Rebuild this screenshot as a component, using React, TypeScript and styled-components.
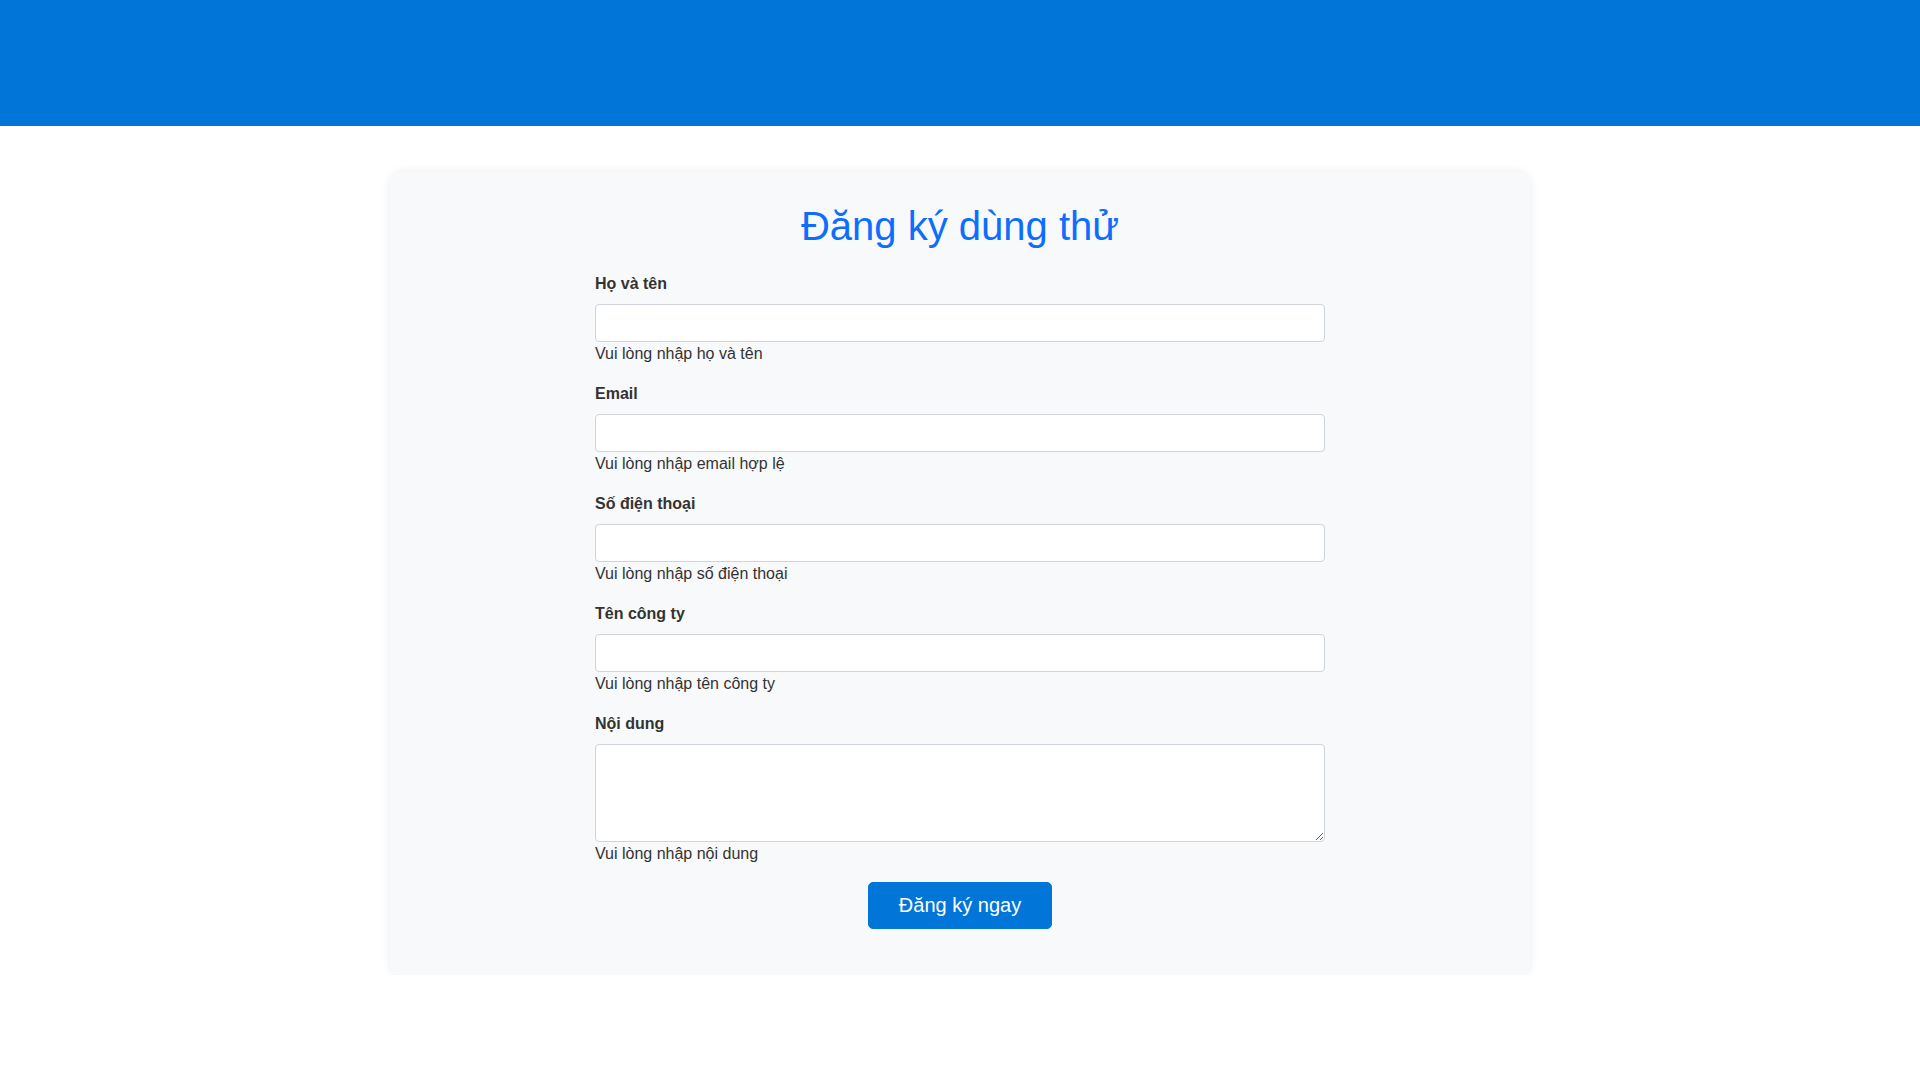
import React from "react";
import styled, { createGlobalStyle } from "styled-components";

const GlobalStyle = createGlobalStyle`
  * { box-sizing: border-box; }
  html, body { margin: 0; padding: 0; background: #ffffff; }
  body {
    font-family: "Liberation Sans", Arial, Helvetica, sans-serif;
    font-size: 16px;
    line-height: 1.5;
    color: #333333;
  }
`;

const Header = styled.header`
  height: 126px;
  background: #0275d8;
`;

const Card = styled.section`
  width: 1140px;
  margin: 46px auto 0;
  padding: 30px 30px 46px;
  background: #f8f9fa;
  border-radius: 10px;
  box-shadow: 0 0 10px rgba(0, 0, 0, 0.08);
`;

const Title = styled.h1`
  margin: 0 0 22px;
  text-align: center;
  font-size: 40px;
  line-height: 48px;
  font-weight: 400;
  color: #0d6efd;
`;

const Form = styled.form`
  width: 730px;
  margin: 0 auto;
  display: flex;
  flex-direction: column;
`;

const Group = styled.div`
  display: flex;
  flex-direction: column;
  margin-bottom: 16px;
`;

const Label = styled.label`
  font-weight: 700;
  font-size: 16px;
  line-height: 24px;
  color: #333333;
  margin-bottom: 8px;
`;

const fieldStyles = `
  width: 100%;
  display: block;
  font-family: "Liberation Sans", Arial, Helvetica, sans-serif;
  font-size: 16px;
  line-height: 24px;
  color: #333333;
  background: #ffffff;
  border: 1px solid #ced4da;
  border-radius: 4px;
  padding: 6px 12px;
  outline: none;
`;

const Input = styled.input`
  ${fieldStyles}
  height: 38px;
`;

const TextArea = styled.textarea`
  ${fieldStyles}
  height: 98px;
  resize: vertical;
`;

const Help = styled.div`
  font-size: 16px;
  line-height: 24px;
  color: #333333;
`;

const Actions = styled.div`
  display: flex;
  justify-content: center;
`;

const Button = styled.button`
  font-family: "Liberation Sans", Arial, Helvetica, sans-serif;
  font-size: 20px;
  line-height: 29px;
  padding: 8px 30px;
  color: #ffffff;
  background: #0275d8;
  border: 1px solid #0275d8;
  border-radius: 5px;
  cursor: pointer;
`;

const fields = [
  { id: "name", label: "Họ và tên", help: "Vui lòng nhập họ và tên", type: "text" },
  { id: "email", label: "Email", help: "Vui lòng nhập email hợp lệ", type: "email" },
  { id: "phone", label: "Số điện thoại", help: "Vui lòng nhập số điện thoại", type: "tel" },
  { id: "company", label: "Tên công ty", help: "Vui lòng nhập tên công ty", type: "text" },
];

export default function App() {
  return (
    <>
      <GlobalStyle />
      <Header />
      <Card>
        <Title>Đăng ký dùng thử</Title>
        <Form onSubmit={(e) => e.preventDefault()}>
          {fields.map((f) => (
            <Group key={f.id}>
              <Label htmlFor={f.id}>{f.label}</Label>
              <Input id={f.id} type={f.type} />
              <Help>{f.help}</Help>
            </Group>
          ))}
          <Group>
            <Label htmlFor="content">Nội dung</Label>
            <TextArea id="content" />
            <Help>Vui lòng nhập nội dung</Help>
          </Group>
          <Actions>
            <Button type="submit">Đăng ký ngay</Button>
          </Actions>
        </Form>
      </Card>
    </>
  );
}
